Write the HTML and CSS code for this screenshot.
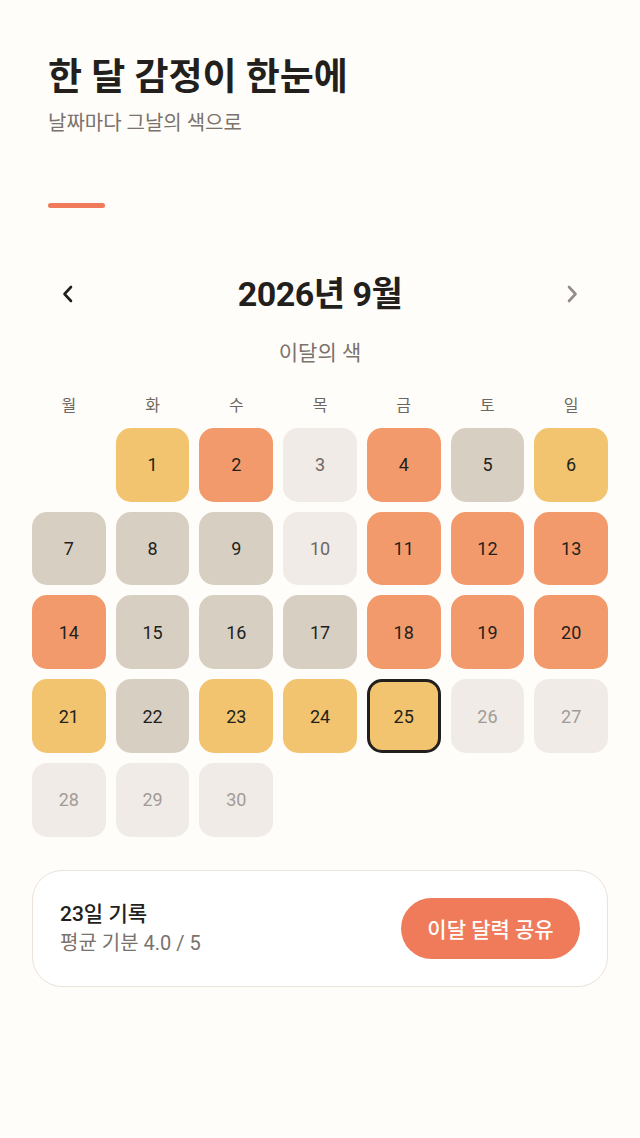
FILE: index.html
```html
<!DOCTYPE html>
<html lang="ko">
<head>
  <meta charset="UTF-8">
  <meta name="viewport" content="width=device-width, initial-scale=1.0">
  <title>한 달 감정</title>
  <link rel="stylesheet" href="styles.css">
</head>
<body>
  <div class="page">
    <header class="header">
      <h1>한 달 감정이 한눈에</h1>
      <p class="subtitle">날짜마다 그날의 색으로</p>
      <div class="accent"></div>
    </header>

    <div class="month-nav">
      <button class="nav-btn prev" aria-label="이전 달">
        <svg width="14" height="20" viewBox="0 0 14 20"><path d="M10 3 L3.5 10 L10 17" fill="none" stroke="currentColor" stroke-width="2.6" stroke-linecap="round" stroke-linejoin="round"/></svg>
      </button>
      <h2 class="month-title">2026년 9월</h2>
      <button class="nav-btn next" aria-label="다음 달">
        <svg width="14" height="20" viewBox="0 0 14 20"><path d="M4 3 L10.5 10 L4 17" fill="none" stroke="currentColor" stroke-width="2.6" stroke-linecap="round" stroke-linejoin="round"/></svg>
      </button>
    </div>

    <p class="caption">이달의 색</p>

    <div class="weekdays">
      <span>월</span><span>화</span><span>수</span><span>목</span><span>금</span><span>토</span><span>일</span>
    </div>

    <div class="calendar">
      <div class="day blank"></div>
      <div class="day yellow">1</div>
      <div class="day orange">2</div>
      <div class="day empty">3</div>
      <div class="day orange">4</div>
      <div class="day beige">5</div>
      <div class="day yellow">6</div>

      <div class="day beige">7</div>
      <div class="day beige">8</div>
      <div class="day beige">9</div>
      <div class="day empty">10</div>
      <div class="day orange">11</div>
      <div class="day orange">12</div>
      <div class="day orange">13</div>

      <div class="day orange">14</div>
      <div class="day beige">15</div>
      <div class="day beige">16</div>
      <div class="day beige">17</div>
      <div class="day orange">18</div>
      <div class="day orange">19</div>
      <div class="day orange">20</div>

      <div class="day yellow">21</div>
      <div class="day beige">22</div>
      <div class="day yellow">23</div>
      <div class="day yellow">24</div>
      <div class="day yellow today">25</div>
      <div class="day future">26</div>
      <div class="day future">27</div>

      <div class="day future">28</div>
      <div class="day future">29</div>
      <div class="day future">30</div>
    </div>

    <div class="summary">
      <div class="summary-text">
        <p class="summary-title">23일 기록</p>
        <p class="summary-sub">평균 기분 4.0 / 5</p>
      </div>
      <button class="share-btn">이달 달력 공유</button>
    </div>
  </div>
</body>
</html>
```

FILE: styles.css
```css
* {
  box-sizing: border-box;
  margin: 0;
  padding: 0;
  font-family: Roboto, 'Noto Sans CJK KR', sans-serif;
}

body {
  background-color: #fffdf9;
  color: #231f1c;
}

.page {
  padding: 55px 32px 40px;
}

.header {
  padding: 0 16px;
}

h1 {
  font-size: 37px;
  line-height: 46px;
  font-weight: 700;
  color: #231f1c;
}

.subtitle {
  margin-top: 9px;
  font-size: 20px;
  line-height: 26px;
  color: #7a726c;
}

.accent {
  margin-top: 67px;
  width: 57px;
  height: 5px;
  border-radius: 3px;
  background-color: #f07b5b;
}

.month-nav {
  margin-top: 65px;
  padding: 0 16px;
  display: flex;
  align-items: center;
  justify-content: space-between;
}

.nav-btn {
  width: 40px;
  height: 40px;
  border: none;
  background: none;
  display: flex;
  align-items: center;
  justify-content: center;
  cursor: pointer;
}

.prev {
  color: #231f1c;
}

.next {
  color: #938c87;
}

.month-title {
  font-size: 34px;
  line-height: 42px;
  font-weight: 700;
  letter-spacing: -0.5px;
}

.caption {
  margin-top: 24px;
  text-align: center;
  font-size: 21px;
  line-height: 28px;
  color: #7a726c;
}

.weekdays {
  margin-top: 29px;
  display: grid;
  grid-template-columns: repeat(7, 1fr);
  gap: 10px;
  font-size: 16px;
  line-height: 20px;
  color: #6e6761;
  text-align: center;
}

.calendar {
  margin-top: 12px;
  display: grid;
  grid-template-columns: repeat(7, 1fr);
  gap: 10px;
}

.day {
  aspect-ratio: 1;
  border-radius: 15px;
  display: flex;
  align-items: center;
  justify-content: center;
  font-size: 18px;
  font-weight: 400;
  color: #231f1c;
}

.blank {
  background: none;
}

.yellow {
  background-color: #f2c46f;
}

.orange {
  background-color: #f29a6b;
}

.beige {
  background-color: #d8cfc3;
}

.empty {
  background-color: #f0ebe7;
  color: #6e6863;
}

.future {
  background-color: #f0ebe7;
  color: #a29b96;
}

.today {
  border: 3px solid #231f1c;
}

.summary {
  margin-top: 33px;
  height: 117px;
  padding: 0 27px;
  background-color: #ffffff;
  border: 1.5px solid #ebe2d9;
  border-radius: 30px;
  display: flex;
  align-items: center;
  justify-content: space-between;
}

.summary-title {
  font-size: 21px;
  line-height: 28px;
  font-weight: 500;
  color: #231f1c;
}

.summary-sub {
  margin-top: 2px;
  font-size: 20px;
  line-height: 26px;
  color: #7a726c;
}

.share-btn {
  width: 179px;
  height: 61px;
  border: none;
  border-radius: 31px;
  background-color: #f07b5b;
  color: #ffffff;
  font-size: 21px;
  font-weight: 500;
  cursor: pointer;
}
```
